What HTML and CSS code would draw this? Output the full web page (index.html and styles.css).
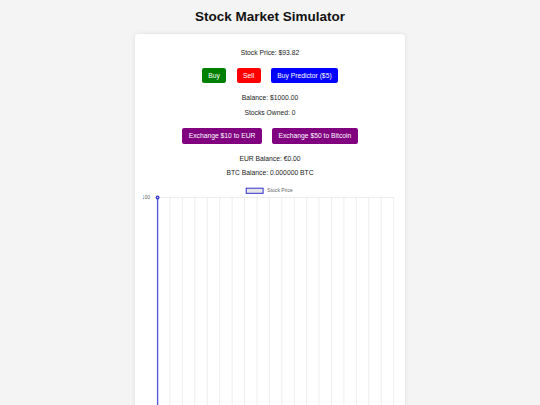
FILE: index.html
```html
<!DOCTYPE html>
<html lang="en">
<head>
    <meta charset="UTF-8">
    <meta name="viewport" content="width=device-width, initial-scale=1.0">
    <title>Stock Market Simulator</title>
    <link rel="stylesheet" href="styles.css">
</head>
<body>
    <h1>Stock Market Simulator</h1>

    <div class="container">
        <p>Stock Price: $<span id="price">93.82</span></p>

        <div class="actions">
            <button class="btn buy">Buy</button>
            <button class="btn sell">Sell</button>
            <button class="btn predictor">Buy Predictor ($5)</button>
        </div>

        <p>Balance: $<span id="balance">1000.00</span></p>
        <p>Stocks Owned: <span id="owned">0</span></p>

        <div class="actions">
            <button class="btn exchange">Exchange $10 to EUR</button>
            <button class="btn exchange">Exchange $50 to Bitcoin</button>
        </div>

        <p>EUR Balance: €<span id="eur">0.00</span></p>
        <p>BTC Balance: <span id="btc">0.000000</span> BTC</p>

        <!-- price chart: legend, y label, grid and the price line -->
        <svg class="chart" width="253" height="240" viewBox="0 0 253 240">
            <rect class="legend-box" x="103.2" y="4.2" width="16.9" height="5.1"/>
            <text class="label" x="124.3" y="6.8">Stock Price</text>

            <text class="label" x="7" y="13.2" text-anchor="end">100</text>
            <line class="grid" x1="10.4" y1="13.5" x2="250.6" y2="13.5"/>

            <line class="grid" x1="27.02" y1="13.5" x2="27.02" y2="240"/>
            <line class="grid" x1="39.44" y1="13.5" x2="39.44" y2="240"/>
            <line class="grid" x1="51.86" y1="13.5" x2="51.86" y2="240"/>
            <line class="grid" x1="64.28" y1="13.5" x2="64.28" y2="240"/>
            <line class="grid" x1="76.7" y1="13.5" x2="76.7" y2="240"/>
            <line class="grid" x1="89.12" y1="13.5" x2="89.12" y2="240"/>
            <line class="grid" x1="101.54" y1="13.5" x2="101.54" y2="240"/>
            <line class="grid" x1="113.96" y1="13.5" x2="113.96" y2="240"/>
            <line class="grid" x1="126.38" y1="13.5" x2="126.38" y2="240"/>
            <line class="grid" x1="138.8" y1="13.5" x2="138.8" y2="240"/>
            <line class="grid" x1="151.22" y1="13.5" x2="151.22" y2="240"/>
            <line class="grid" x1="163.64" y1="13.5" x2="163.64" y2="240"/>
            <line class="grid" x1="176.06" y1="13.5" x2="176.06" y2="240"/>
            <line class="grid" x1="188.48" y1="13.5" x2="188.48" y2="240"/>
            <line class="grid" x1="200.9" y1="13.5" x2="200.9" y2="240"/>
            <line class="grid" x1="213.32" y1="13.5" x2="213.32" y2="240"/>
            <line class="grid" x1="225.74" y1="13.5" x2="225.74" y2="240"/>
            <line class="grid" x1="238.16" y1="13.5" x2="238.16" y2="240"/>
            <line class="grid" x1="250.58" y1="13.5" x2="250.58" y2="240"/>

            <line class="price-line" x1="14.6" y1="13.5" x2="14.6" y2="240"/>
            <circle class="price-point" cx="14.6" cy="13.5" r="1.3"/>
        </svg>
    </div>
</body>
</html>
```

FILE: styles.css
```css
body {
    font-family: 'Liberation Sans', Arial, sans-serif;
    font-size: 6.75px;
    line-height: 7.76px;
    margin: 0;
    padding: 0;
    background-color: #f4f4f4;
    color: #222;
    text-align: center;
}
h1 {
    font-size: 13.5px;
    line-height: 15.5px;
    margin: 9.05px 0;
    color: #111;
}
.container {
    width: 253.1px;
    margin: 0 auto;
    background-color: white;
    padding: 8.44px;
    border-radius: 3.4px;
    box-shadow: 0 0 4px rgba(0,0,0,0.1);
}
p {
    margin: 6.75px 0;
}
.actions {
    line-height: 7.76px;
}
.btn {
    display: inline-block;
    vertical-align: top;
    font-family: inherit;
    font-size: 6.75px;
    line-height: 7.76px;
    color: white;
    border: none;
    padding: 4.1px 6.33px;
    margin: 4.22px;
    border-radius: 2.1px;
    cursor: pointer;
}
.btn.buy {
    background-color: #008000;
}
.btn.sell {
    background-color: #ff0000;
}
.btn.predictor {
    background-color: #0000ff;
}
.btn.exchange {
    background-color: #800080;
}
.chart {
    display: block;
}
.chart .label {
    font-family: 'Liberation Sans', Arial, sans-serif;
    font-size: 5.06px;
    fill: #666;
    dominant-baseline: middle;
}
.chart .legend-box {
    fill: #e6e6e6;
    stroke: #3030d0;
    stroke-width: 1;
}
.chart .grid {
    stroke: rgba(0,0,0,0.07);
    stroke-width: 1;
}
.chart .price-line {
    stroke: #5a5ade;
    stroke-width: 1.4;
}
.chart .price-point {
    fill: #e6e6e6;
    stroke: #3030d0;
    stroke-width: 1.27;
}
```
